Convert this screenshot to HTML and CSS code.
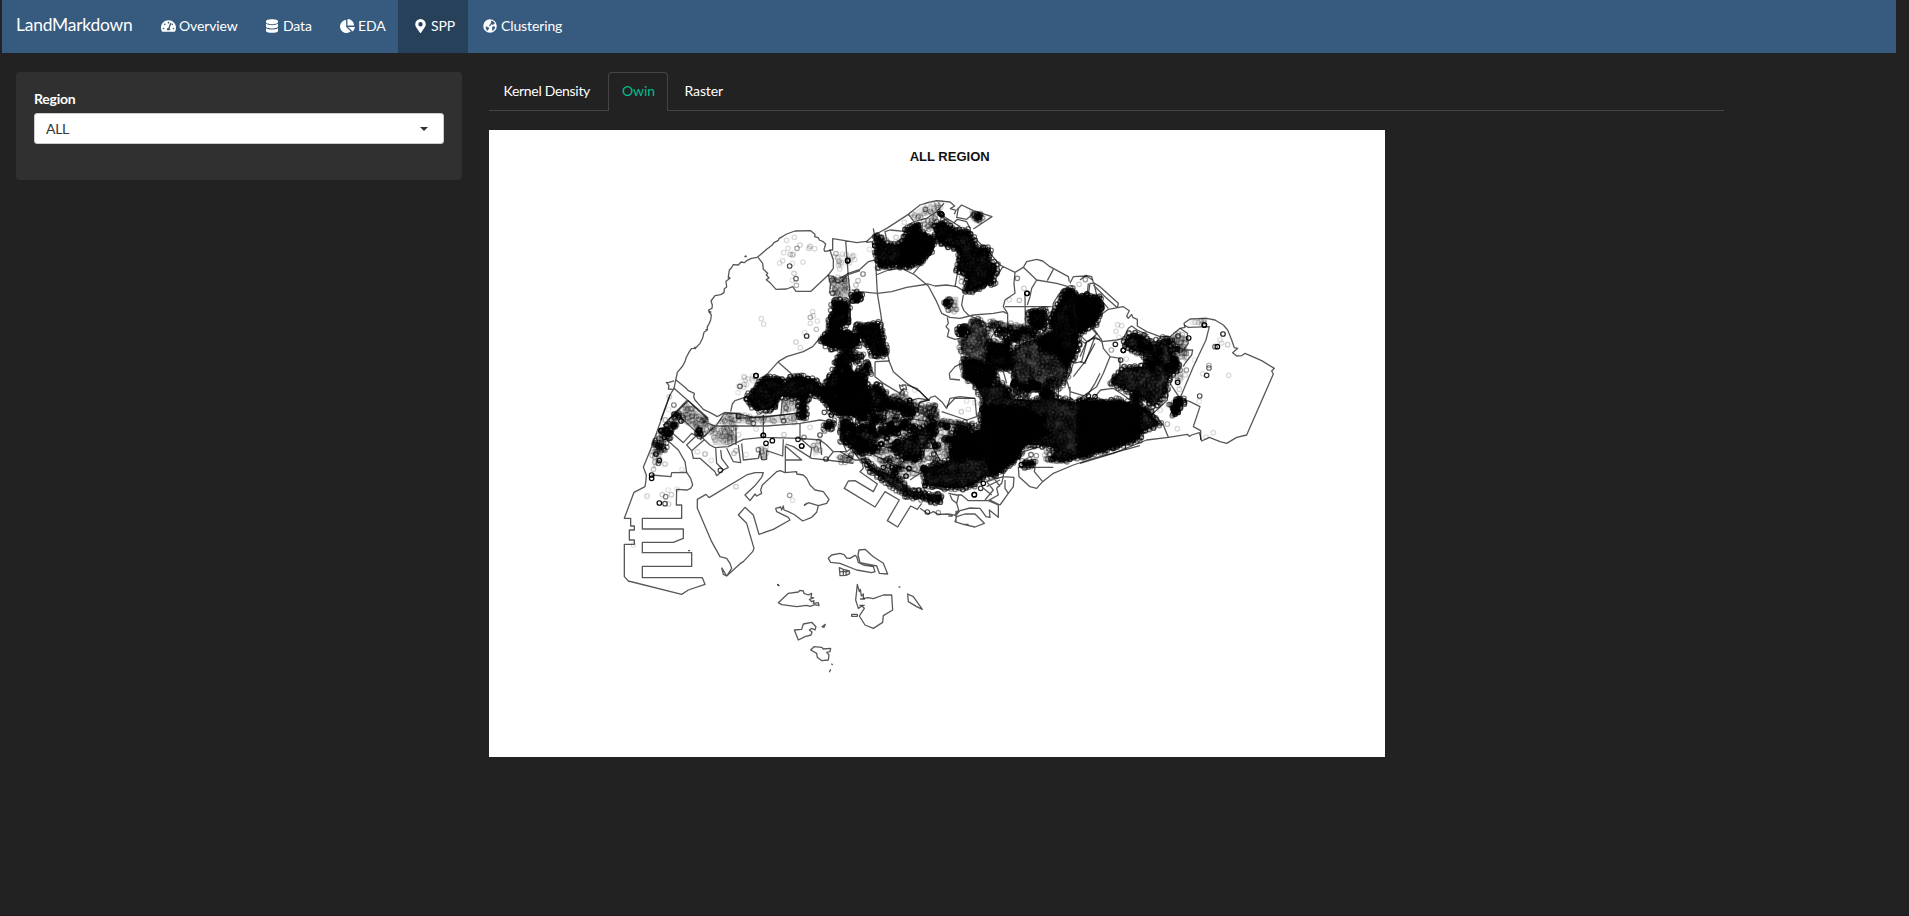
FILE: index.html
```html
<!DOCTYPE html>
<html lang="en">
<head>
<meta charset="utf-8">
<title>LandMarkdown</title>
<link rel="stylesheet" href="styles.css">
</head>
<body>
<nav class="navbar">
  <span class="brand">LandMarkdown</span>
  <a class="nav-item overview"><svg class="icon" viewBox="0 0 576 512" style="width:15px"><path fill-rule="evenodd" d="M288 32C129 32 0 161 0 320c0 53 14 102 39 145 6 10 16 15 28 15h442c12 0 22-5 28-15 25-43 39-92 39-145C576 161 447 32 288 32zm0 64a32 32 0 1 1 0 64 32 32 0 0 1 0-64zM96 384a32 32 0 1 1 0-64 32 32 0 0 1 0 64zm48-160a32 32 0 1 1 0-64 32 32 0 0 1 0 64zm247-54-60 182c26 20 30 46 14 64H231c-20-52 10-94 55-96l60-165c12-28 55-12 45 15zM480 384a32 32 0 1 1 0-64 32 32 0 0 1 0 64zm-48-160a32 32 0 1 1 0-64 32 32 0 0 1 0 64z"/></svg><span>Overview</span></a>
  <a class="nav-item data"><svg class="icon" viewBox="0 0 448 512" style="width:12px"><path d="M448 73v46c0 40-100 73-224 73S0 159 0 119V73C0 33 100 0 224 0s224 33 224 73zm0 103v103c0 40-100 73-224 73S0 319 0 279V176c48 33 136 49 224 49s176-16 224-49zm0 160v103c0 40-100 73-224 73S0 479 0 439V336c48 33 136 49 224 49s176-16 224-49z"/></svg><span>Data</span></a>
  <a class="nav-item eda"><svg class="icon" viewBox="0 0 544 512" style="width:15px"><path d="M527 288H290l158 158c6 6 16 7 23 1 38-36 65-86 73-141 1-9-7-18-17-18zM511 223C503 103 408 8 288 0c-9-1-16 7-16 16v224h224c9 0 16-8 15-17zM224 288V51c0-10-9-18-18-17C86 51-4 156 0 281c5 129 115 233 244 231 50-1 97-17 135-44 8-6 9-17 2-24z"/></svg><span>EDA</span></a>
  <a class="nav-item active"><svg class="icon" viewBox="0 0 384 512" style="width:11px"><path fill-rule="evenodd" d="M172 502C27 291 0 270 0 192a192 192 0 1 1 384 0c0 78-27 99-172 310-10 13-30 13-40 0zM192 272a80 80 0 1 0 0-160 80 80 0 0 0 0 160z"/></svg><span>SPP</span></a>
  <a class="nav-item clustering"><svg class="icon" viewBox="0 0 496 512" style="width:14px"><path fill-rule="evenodd" d="M248 8a248 248 0 1 0 0 496 248 248 0 0 0 0-496zM300 55c60 14 105 59 131 118l-27 3-24 29-38 14-22-25-23 11-13 26-28 17-2 22-28-6-12-18 10-34 34-17 14-7-8-32 24-24-2-30zM90 270l38 6 38 22 32 8 18 31-17 35-18 17-16 44c-49-32-76-91-75-163zm276-5 47 11 25 16c-9 58-44 108-93 138l-23-32 11-45-11-33 11-36z"/></svg><span>Clustering</span></a>
</nav>
<main class="page">
  <aside class="well">
    <label class="label">Region</label>
    <div class="select"><span>ALL</span><i class="caret"></i></div>
  </aside>
  <section class="content">
    <div class="tabs"><a class="tab kernel">Kernel Density</a><a class="tab selected">Owin</a><a class="tab">Raster</a></div>
    <svg class="plot" viewBox="489 130 896 627">
      <rect x="489" y="130" width="896" height="627" fill="#fff"/>
      <text class="plot-title" x="949.7" y="161" text-anchor="middle">ALL REGION</text>
      <g id="points"></g>
      <g class="outline">
        <g transform="translate(600 180) scale(.33333)">
          <path d="M472,232 500,208 516,196 522,188 535,181 537,176 560,162 585,153 632,152 645,163 644,170 655,173 658,180 668,184 677,192 672,208 674,214 682,213 690,211 700,240 700,265 685,285 660,308 633,334 588,334 578,320 560,327 528,328 512,310 499,299 507,294 499,285 503,280 490,268 488,250 474,232"/>
          <path d="M472,232 454,235 440,242 433,248 423,246 415,255 400,254 394,264 388,270 385,290 390,295 378,304 380,321 373,326 372,338 362,344 345,347 333,363 337,375 336,385 326,390 329,398 334,405 332,420 328,430 322,440 322,450 312,457 308,474 300,490 291,500 283,505 274,506 268,515 258,534 255,545 248,558 232,577 222,625 210,645 182,720M222,603 205,608 199,607 207,617 205,627 218,628M436,226l3,4h-6M383,293l6,2M324,392l9,4h-8M317,448l5,4M282,501l6,6"/>
          <path d="M228,600 255,622 265,632 283,640 281,650 285,660 310,688 335,700 352,710M222,625 262,660 325,720M262,660 205,720M688,210H698V176L735,182 770,188 800,184M737,182 745,290 750,340 750,432H720M682,286 700,289 709,307 718,308 725,305 742,285 780,272M685,285 692,315 688,340M685,455 655,480 638,500 610,515 560,530 535,545 495,590 435,652 405,662 397,672 392,695M535,547 575,582M547,655 543,705M352,710 375,697 410,700 460,712 600,700"/>
        </g>
        <g transform="translate(840 180) scale(.33333)">
          <path d="M78,187 90,175 103,165 140,145 205,103 240,75 265,67 290,62 330,66 344,78 331,86 348,91 343,103M100,145 104,170 108,265 112,340 122,400 135,490 148,545 160,575 200,610 240,635 265,660 272,652 285,648 305,665 320,685 330,655 360,650 405,655M0,295 25,280 60,268 85,245 105,240M98,203 97,185 80,187M35,330 60,335 112,340 155,335 200,322 265,312 285,318 320,315 350,320 375,335M108,285 145,270 185,265 225,285 265,318 290,365 305,400 330,412 360,415 400,405 460,400 490,395 503,402V490M370,345 365,375 372,392 385,405 430,425 440,440M220,280 280,210"/>
          <path d="M355,228V265L345,320M350,90 365,75 400,92 456,110 400,147M355,85 350,112 380,118 395,105 400,92M340,130 352,118 380,125 390,145M205,103 222,125 260,115 290,95 312,70M140,180 135,155 150,150 200,155 225,130M360,140 320,115 290,95M410,180 450,220 480,255 525,277 550,262 560,245 590,238 608,243 630,260 685,290 688,305M525,277 522,310 525,340 495,360 490,380 503,400M490,258 470,290M550,262 590,300 575,325 570,350 562,375M590,300 650,310 685,320M640,268 622,302M685,320 655,345 640,370 635,400 615,430M495,380H635M555,340 556,430M322,412 325,430 318,440 327,450 322,470 345,478 360,475M328,580 345,560 365,550M328,580 330,597 360,600M690,310 700,290 740,288 758,300M745,310 742,340"/>
          <path d="M720,465 740,485 725,545 700,550 690,580 680,600 690,635M690,635 740,650 765,610 780,580M740,485 760,475 780,478M755,445 770,462 745,485M765,490 735,545 700,590M105,545 148,543M105,545V590L130,610 180,640 190,625 200,630 197,615 185,615M390,535 455,560 490,575 500,610M480,435 455,470 450,490M130,645 200,665 235,655 265,660M110,690 150,650M230,690 240,665 270,660M540,610 542,670M600,640 660,665M655,620V660M690,620V665"/>
        </g>
        <g transform="translate(1080 240) scale(.33333)">
          <path d="M0,120 18,106 35,110 40,128 60,140 115,190 112,203 75,170 40,135M25,165 30,130H42L50,165 85,205M40,265 55,230 85,208 130,200 148,212 140,228 145,235 155,223 158,232 172,238V258L200,275 240,290 270,290 300,265 315,262 312,250 330,237 380,235 405,240 430,255 443,270 455,300 463,323 473,325 458,338 470,348 485,347 495,340 545,362 583,385 575,393 580,402 500,585 470,592 440,610 420,605 388,592 365,603 358,578 335,585 328,589 322,583 265,592 200,600 100,640 0,670"/>
          <path d="M65,305 110,300 130,295 145,265 155,258 175,272 205,285M40,265 65,300 70,325 90,350 120,355V400L90,420M312,255 325,262 388,260 378,300 340,380 300,475 270,430M300,475 330,485 360,500 340,560 362,572V600M300,265 322,280 325,310 310,330 338,330 335,345 315,370 310,380M90,350 70,400 50,440 0,475M0,280 40,265M0,300 15,310 45,290 65,305M45,290 15,370 0,365M20,305 0,350M40,475 62,450 100,445 130,465 150,480M220,520 250,555 265,592M262,445V480L220,520M138,630 130,575 150,560"/>
        </g>
        <g transform="translate(600 380) scale(.33333)">
          <path d="M210,45 155,200 130,262 139,285 138,300 135,320 102,337 73,415H92V438H103V450H88V480H103V493H73V590L85,603 245,643 265,630 315,613 307,593H127V559H275V518H127V487H220L250,475V447H127V415H245V375H229L230,328 262,330 272,325 278,315 272,295 260,277 215,278 213,290 155,285"/>
          <path d="M205,125 190,135 250,188 275,160 288,168 260,195 275,212 312,180M195,130 265,62 325,115M225,95 330,195M190,170 235,210 255,245 260,277M300,180 350,135 372,102 410,100M330,195 345,203 385,200 430,178 490,172 600,175 660,180 680,195 700,215 740,215 780,185M325,130 345,138 500,138 600,130 600,175M600,130 660,120 690,125M408,135V195M490,105V172M410,100V115L490,112 600,98M275,212 280,235 300,235 345,275 350,287 370,270 350,250 347,205M362,210 365,235 385,262 370,270M380,205 400,245 422,248 415,195M425,190 430,240 475,235 480,215M480,215 485,238H500V212L548,228 550,178M556,276V198L605,240 556,240M557,192 580,200 635,235 680,240 760,250M600,175 635,205 630,235M660,180 665,225M700,215 680,240M740,140 720,170 740,215"/>
          <path d="M327,353 440,285 465,278 490,278 485,292 463,319 435,345 450,362 465,342 470,348 485,340 482,330 487,315 530,275 540,272 555,278 590,275 590,282 610,285 620,295 630,315 645,330 670,335 687,358 680,370 655,377 625,368 612,377M655,377 650,397 635,412 608,423 585,405 565,395 552,390 550,378 545,390 542,381 527,385 530,395 565,412 570,420 520,448 477,463 460,405 435,382 415,405 440,430 462,505 458,515 430,545 422,550 380,588 370,583 365,563M380,588 395,565 390,550 380,535 360,530 335,485 292,385V358L318,343 327,353M365,563 380,588M612,375l10,-6M264,512h6M532,613l6,5"/>
        </g>
        <g transform="translate(840 380) scale(.33333)">
          <path d="M65,240 70,265 60,275 112,312 100,335 45,302 25,303 13,325 105,381 135,335 178,360 142,422 173,441 212,378 232,388 245,370M240,385 265,402 280,395 295,403 325,402 348,406 360,392 390,384 420,385 438,410 450,412 448,390 475,412V375L445,362H385L365,345 350,345 325,340M345,425 350,410 375,402H405L433,430 405,441 370,433ZM348,392V425M366,433H386M325,408H338M330,345 337,360 350,370 356,390 345,405M356,345 350,370M480,375 505,340 520,320 522,292 490,290 485,310 470,325 475,345 445,362M480,375 450,360M490,270V290L440,305 460,330 435,360M455,285 480,320M430,325 455,345M495,300 495,325 505,340M440,320 480,300M535,260 537,290 570,320 590,325 608,305 640,280 700,255 760,235 900,197M537,240 550,215 600,200M585,262 583,275 608,305M537,262H640"/>
          <path d="M120,130 135,115 140,80 200,95M200,15 230,25 265,60 235,70V95L290,125 380,140M320,80 345,55H405L410,110 380,120 305,95M190,20 178,15 182,28 193,30M300,240 280,205 255,205 260,180M100,225 180,260 240,280M130,200 210,215M160,155 210,115 290,130M320,185 330,140M150,160 185,175 230,180M240,280 210,300M0,215 45,240 65,240M30,200 60,240M205,60V90"/>
        </g>
        <g transform="translate(740 530) scale(.33333)">
          <path d="M265,85 275,75 300,70 312,74 320,84 330,85 345,76 350,80 355,97 370,105 400,110 405,125 395,128 350,120 300,100 272,97ZM357,60 375,58 400,80 430,100 443,132 418,130 410,108 360,98 354,75ZM298,113 310,118 328,123 329,131 318,136 300,137ZM298,125H325M310,118V136M318,120V136M115,218 145,190 175,186 180,181 190,183 192,190 205,195 215,190 213,202 221,204 208,208 215,215 222,212 220,220 235,218 237,227 225,224 210,229 200,226 170,230 125,224ZM352,163 358,185 361,178 364,198 370,192 370,205 385,203 400,206 430,195 455,195 458,240 430,257 428,277 400,295 375,285 358,258 373,235 366,228 355,235 347,210Z"/>
          <path d="M360,207H375M358,226H374M335,253H352V259H335ZM503,192 520,200 547,238 530,230 505,215ZM163,300 185,298 190,282 215,277 228,290 225,300 215,295 208,300 216,306 213,315 195,320 175,330ZM246,290 256,283 252,292ZM212,360 222,350 245,352 250,357 272,355 270,365 260,367 267,375 265,390 245,392 232,382 230,370ZM112,163l5,4M476,171h5M274,401l4,4M272,418l-4,9"/>
        </g>
      </g>
    </svg>
  </section>
</main>
<script src="map.js"></script>
</body>
</html>
```
FILE: styles.css
```css
* { box-sizing: border-box; }
body { margin: 0; background: #222; color: #fff; font: 14px/20px Lato, sans-serif; letter-spacing: -0.12px; overflow: hidden; height: 916px; border-bottom: 1px solid #1f191e; }
.navbar { display: flex; align-items: stretch; height: 53px; margin: 0 13px 0 2px; background: #375a7f; }
.brand { width: 144px; padding: 14px 0 0 14px; font-size: 17.4px; line-height: 22px; letter-spacing: -0.2px; }
.nav-item { display: flex; align-items: center; gap: 3px; padding: 0 0 1px 15px; white-space: nowrap; }
.icon { height: 14px; fill: #fff; flex: none; }
.overview { width: 105px; }
.data { width: 74px; gap: 5px; }
.eda { width: 73px; }
.active { width: 70px; padding-left: 17px; gap: 5px; background: #28415b; }
.clustering { gap: 4px; }
.page { display: flex; align-items: flex-start; gap: 27px; padding: 19px 0 0 16px; }
.well { width: 446px; height: 108px; padding: 17px 18px 0; background: #303030; border-radius: 4px; }
.label { display: block; height: 24px; font-weight: 700; letter-spacing: -0.25px; }
.select { display: flex; align-items: center; justify-content: space-between; height: 31px; padding: 0 15px 0 11px; background: #fff; border: 1px solid #ccc; border-radius: 3px; color: #333; letter-spacing: -0.3px; }
.caret { border: 4.5px solid transparent; border-top-color: #333; border-bottom: 0; }
.content { width: 1235px; }
.tabs { display: flex; height: 39px; margin-bottom: 19px; border-bottom: 1px solid #444; }
.tab { height: 39px; padding: 9px 15px 0 16.5px; white-space: nowrap; }
.kernel { width: 119px; padding-left: 14.5px; padding-right: 0; letter-spacing: -0.3px; }
.selected { width: 60px; padding: 8px 0 0 13px; color: #00bc8c; background: #222; border: 1px solid #444; border-bottom: 0; border-radius: 4px 4px 0 0; }
.plot { display: block; width: 896px; height: 627px; }
.plot-title { font: bold 13px "Liberation Sans", sans-serif; letter-spacing: 0; fill: #111; }
.outline { fill: none; stroke: #000; stroke-opacity: .66; stroke-width: 3.9; stroke-linejoin: round; }
```
FILE: map.js
```js
// Event markers are scattered inside hand-digitised areas, three units per pixel.
// Area: [originX, originY, density, base opacity, marker opacity, polygon]
const areas = [
  [600,180,.018,.97,.8,"700,365 725,360 745,370 745,405 742,430 718,435 722,450 760,460 780,458 780,488 760,505 720,507 690,503 665,488 668,470 688,455 687,420 697,400"],
  [600,180,.018,.9,.8,"440,655 480,605 500,593 538,595 552,612 570,595 600,588 640,600 670,625 690,585 708,565 708,545 735,508 748,508 748,545 745,570 780,590 800,600 800,720 780,715 740,690 720,700 690,690 680,670 660,650 630,640 618,660 618,715 597,715 598,680 600,655 550,648 535,655 525,680 505,690 480,690 460,680"],
  [840,180,.018,.85,.8,"108,168 122,172 135,190 165,195 190,185 197,162 230,155 255,162 280,182 275,208 240,245 205,260 180,260 170,255 118,262 110,230"],
  [840,180,.018,.95,.8,"200,175 230,158 280,182 275,208 240,245 195,255 185,220"],
  [840,180,.018,.9,.8,"195,150 215,140 235,130 242,145 215,158"],
  [840,180,.018,.87,.8,"287,130 310,125 345,150 365,155 388,152 400,180 410,204 440,204 448,215 446,240 470,258 464,285 460,308 430,318 400,330 380,336 376,326 384,300 375,278 350,272 355,255 362,225 350,205 320,197 298,188 285,170"],
  [840,180,.02,1,1,"38,345 50,337 62,345 63,357 52,366 39,360"],
  [840,180,.03,.8,.5,"404,107 415,98 424,105 422,118 410,122"],
  [840,180,.02,1,1,"355,447 370,436 383,447 380,462 366,467 355,460"],
  [840,180,.03,.9,.8,"315,362 330,360 330,374 318,374"],
  [840,180,.02,.93,.8,"45,438 118,430 122,455 135,500 138,525 110,530 95,520 80,490 65,465"],
  [840,180,.02,.85,.8,"65,562 85,545 88,582 68,600 60,640 57,695 0,700 0,600 20,590 40,600 50,580"],
  [840,180,.02,.8,.8,"82,628 110,613 138,642 130,678 100,685 82,660"],
  [840,180,.018,.93,.8,"682,324 700,330 710,348 745,355 780,350 780,395 765,430 745,445 712,460 715,500 697,540 675,555 650,520 610,510 590,485 605,470 640,450 628,430 640,400 655,372"],
  [840,180,.018,.93,.8,"568,395 580,388 616,393 616,435 600,450 568,437"],
  [840,180,.013,.72,.6,"520,510 545,488 600,475 650,490 690,540 680,590 655,622 600,630 540,632 522,600 512,560"],
  [840,180,.013,.62,.5,"395,420 418,418 438,450 445,482 480,492 510,497 513,560 500,570 460,560 468,590 448,618 400,605 372,590 368,540 385,530 362,510 362,485 385,465"],
  [840,180,.015,.8,.7,"445,490 505,495 510,560 480,565 440,545"],
  [840,180,.015,.85,.8,"375,540 400,540 465,570 450,615 420,615 380,590"],
  [840,180,.013,.45,.4,"445,435 470,422 560,438 600,453 600,472 530,482 500,460 470,440 450,448"],
  [1080,240,.02,.97,.8,"0,172 20,165 48,180 66,200 48,230 0,270"],
  [1080,240,.014,.8,.7,"132,315 138,300 152,282 188,288 212,305 220,318 248,296 272,298 268,325 285,350 297,370 290,395 265,415 258,460 222,500 190,475 140,450 95,432 98,415 130,385 200,378 200,350 180,335 155,330"],
  [1080,240,.014,.82,.7,"0,480 60,485 110,480 155,492 200,505 215,525 240,552 165,585 150,605 60,635 0,652"],
  [1080,240,.02,1,1,"157,467 168,460 180,468 176,480 163,483"],
  [840,380,.014,.84,.7,"400,0 445,0 460,20 475,5 500,20 515,55 560,60 600,60 610,30 640,35 645,55 700,65 760,62 800,70 900,75 900,177 860,188 780,210 680,245 630,235 650,205 600,195 550,195 540,220 500,260 465,285 435,290 400,315 370,325 320,325 255,315 248,265 300,255 330,240 345,210 380,185 420,170 425,110 430,60"],
  [840,380,.02,1,1,"430,80 520,80 600,110 620,160 550,190 530,230 460,280 440,200"],
  [840,380,.018,.75,.7,"60,140 90,130 115,165 100,215 75,215 55,180"],
  [840,380,.016,.7,.7,"150,200 190,180 240,150 275,125 290,160 252,200 240,235 190,240"],
  [840,380,.016,.75,.7,"340,150 380,150 430,180 420,230 340,230"],
  [840,380,.014,.75,.7,"70,235 100,265 160,285 215,332 250,335 255,358 210,350 150,315 90,270"],
  [840,380,.018,.8,.7,"260,342 305,345 300,362 280,368 260,360"],
  [840,380,.03,.8,.6,"548,247 580,242 585,255 550,258"],
  [840,380,.02,.85,.7,"120,145 150,140 158,155 140,168 118,160"],
  [840,380,.02,.75,.7,"130,70 175,65 230,90 220,105 180,90"],
  [840,380,.014,.4,.5,"235,75 285,70 300,120 380,125 365,145 300,140 240,100"],
  [840,380,.014,.35,.4,"0,90 60,150 60,230 30,190 0,170"],
  [840,380,.008,.12,.3,"60,80 140,80 210,100 300,130 340,150 330,235 250,245 240,290 170,290 100,240 90,130"],
  [840,380,.008,.15,.3,"610,210 670,200 680,245 620,250"],
  [840,380,.01,.3,.4,"130,50 190,35 235,70 235,95 180,90 140,80"],
  [600,380,.02,.7,.7,"725,145 755,145 780,175 800,200 780,220 750,195 725,180"],
  [600,380,.02,.75,.7,"673,130 700,125 702,142 675,148"],
  [600,380,.012,.15,.3,"230,97 262,68 320,118 340,135 312,175 265,130"],
  [600,380,.011,.15,.3,"325,145 350,138 408,140 404,185 375,198 340,195"],
  [600,380,.009,.15,.3,"345,132 375,102 410,103 500,110 595,103 595,128"],
  [600,380,.012,.12,.35,"160,270 155,220 165,180 190,135 215,115 235,120 200,150 185,200 185,240"],
  [600,380,.01,.2,.3,"550,60 590,60 595,90 545,100"],
  [600,380,.012,.1,.3,"635,195 660,180 665,220 640,230"],
  [600,380,.012,.2,.4,"705,230 755,222 760,248 720,248"],
  [600,380,.012,.1,.3,"478,200 500,200 500,235 485,238"],
  [600,180,.012,.25,.3,"690,295 740,285 748,350 700,350"],
  [600,180,.008,.05,.2,"700,225 765,215 765,240 720,270"],
  [840,180,.009,.1,.25,"210,105 245,78 305,65 300,95 250,110 225,122"],
  [840,180,.012,.2,.3,"320,350 355,350 355,395 325,400"],
  [840,180,.012,.15,.35,"245,125 290,100 285,140 260,155"],
  [840,180,.012,.2,.3,"388,90 430,103 425,120 390,115"],
  [1080,240,.012,.2,.3,"270,290 300,275 322,300 320,370 290,340"],
  [1080,240,.014,.3,.4,"262,490 310,480 300,515 280,520"],
  [1080,240,.009,.06,.2,"325,240 380,238 375,255 330,255"],
  [1080,240,.007,.04,.25,"295,390 325,380 300,450 280,430"],
  [600,180,.008,.02,.15,"410,600 445,585 470,590 430,635 410,640"]
];
// Mixed-density districts: [originX, originY, cluster count, polygon]
const mixed = [
  [840,380,75,"0,40 60,50 100,40 160,70 230,90 290,115 370,130 425,160 410,200 340,250 250,270 170,290 90,250 60,200 0,120"],
  [840,380,14,"320,140 420,140 430,230 330,240"],
  [840,380,12,"500,0 640,0 640,50 520,50"],
  [840,180,14,"440,430 560,440 610,470 600,490 450,490"],
  [840,180,8,"0,500 60,510 60,600 0,600"],
  [1080,240,14,"130,290 280,300 300,370 270,410 210,400 200,350"],
  [600,180,10,"660,600 720,570 780,620 780,710 690,690"],
  [600,380,14,"160,260 160,200 200,130 265,80 330,130 370,170 340,190 260,130"],
  [1080,240,7,"262,480 310,480 285,520"]
];
// Single markers: originX, originY, then x,y,opacity triples
const singles = [
  [600,180,"560,181,.15 583,172,.15 564,205,.15 591,205,.35 600,195,.2 551,218,.15 571,223,.2 577,225,.2 580,222,.15 539,249,.15 548,242,.15 578,250,.12 609,246,.15 569,258,.7 582,280,.2 588,296,.6 577,301,.12 589,316,.3 627,205,.2 630,199,.2 644,206,.15 484,416,.15 491,432,.15 638,395,.15 631,412,.3 640,407,.15 652,423,.15 631,430,.15 649,448,.25 614,458,.12 620,468,.85 588,486,.2 601,503,.15 743,242,1 743,242,1 708,221,.3 698,340,.6 420,619,.6 432,590,.15 468,587,1 468,587,.8 546,597,.9 208,650,.2 206,689,.1 221,675,.3 272,686,.35 673,697,.7 694,705,1 708,690,1 717,680,1 725,695,1"],
  [840,180,"69,282,.5 88,208,.12 168,172,.2 139,180,.3 193,127,.15 234,111,.35 256,88,.5 304,102,1 304,102,1 300,100,1 306,105,1 365,290,.3 364,305,.3 374,326,.3 532,295,.5 508,359,.15 538,361,.25 552,325,.2 561,340,1 561,340,.9 717,313,.2 736,298,.2 444,446,.8 460,450,.4 54,302,.25 48,315,.25 364,695,.2 385,688,.12 380,663,.12 405,668,.12 224,630,.1 209,661,1 209,674,1 220,698,1 473,598,.8"],
  [1080,240,"16,119,.25 113,254,.15 125,257,.15 108,274,.15 117,292,.12 94,330,.35 106,313,.9 130,331,1 130,331,1 122,360,.8 162,286,1 228,299,.6 294,288,.8 326,294,1 300,330,.7 373,255,1 373,255,.9 429,282,.9 420,300,.15 425,309,.15 443,314,.2 405,320,.6 412,320,1 387,376,.3 387,384,.6 380,406,.8 368,401,.15 446,406,.15 359,468,.7 358,484,.1 400,578,.15 378,591,.15 292,566,.15 262,552,.3 319,390,.4 293,427,1 285,523,.7 277,527,.5 287,485,1 241,510,.15 344,360,.1 139,357,.15 45,470,.9 25,468,.9 215,515,.8"],
  [600,380,"222,75,.3 243,123,1 183,152,1 183,152,1 193,172,1 200,135,.6 168,222,1 178,242,.9 155,285,1 155,295,1 195,252,.25 246,268,.1 141,346,.1 141,350,.1 178,369,1 195,371,.7 206,372,.2 197,350,.5 187,344,.2 214,344,.2 204,330,.12 231,327,.12 100,495,.12 408,320,.2 569,346,.4 578,361,.12 361,271,.7 315,222,.3 292,215,.15 334,241,.12 408,212,.25 402,220,.25 438,224,.12 551,123,.4 522,124,.3 460,130,.6 490,166,1 490,166,1 498,190,1 517,182,1 552,164,.2 630,142,.15 605,198,1 605,198,.8 594,178,.9 612,172,.5 660,165,.7 678,237,.7 468,147,.15 416,164,.15 388,165,.3 475,209,.5 738,187,1 738,187,1"],
  [840,380,"123,193,1 123,193,1 105,216,.4 130,262,.9 145,258,.7 207,266,1 198,288,1 167,278,1 255,317,1 262,396,.7 295,398,.4 194,350,.5 281,222,.7 275,235,.2 302,168,.15 165,120,.15 175,130,.3 175,134,.3 336,226,1 573,224,.6 589,227,.4 544,254,1 566,260,.2 240,155,.15 403,344,1 403,344,1 430,310,1 422,325,.8 20,187,1 20,187,1 15,238,.3 120,240,.3"]
];
let seed = 48271;
const rnd = () => (seed = seed * 16807 % 2147483647) / 2147483647;
const inside = (p, x, y) => {
  let hit = false;
  for (let i = 0, j = p.length - 1; i < p.length; j = i++)
    if ((p[i][1] > y) !== (p[j][1] > y) && x < (p[j][0] - p[i][0]) * (y - p[i][1]) / (p[j][1] - p[i][1]) + p[i][0]) hit = !hit;
  return hit;
};
const ring = (x, y, o) => `<circle cx="${x.toFixed(1)}" cy="${y.toFixed(1)}" r="6.8" stroke-opacity="${o}"/>`;
const parse = text => {
  const p = text.split(" ").map(s => s.split(",").map(Number));
  const xs = p.map(q => q[0]), ys = p.map(q => q[1]);
  const x0 = Math.min(...xs), y0 = Math.min(...ys);
  return { p, x0, y0, w: Math.max(...xs) - x0, h: Math.max(...ys) - y0 };
};
const open = (ox, oy) => `<g transform="translate(${ox} ${oy}) scale(.33333)" fill="none" stroke="#000" stroke-width="3.6">`;
let out = "";
for (const [ox, oy, density, base, opacity, text] of areas) {
  const { p, x0, y0, w, h } = parse(text);
  out += open(ox, oy) + `<polygon points="${text}" fill="#000" stroke="none" fill-opacity="${base}"/>`;
  for (let i = 0; i < w * h * density; i++) {
    const x = x0 + rnd() * w, y = y0 + rnd() * h;
    if (inside(p, x, y)) out += ring(x, y, opacity * (base > .6 ? .5 : .7));
  }
  if (base > .6) p.forEach((a, k) => {
    const b = p[(k + 1) % p.length], n = Math.ceil(Math.hypot(b[0] - a[0], b[1] - a[1]) / 5);
    for (let i = 0; i < n; i++) out += ring(a[0] + (b[0] - a[0]) * i / n + rnd() * 12 - 6, a[1] + (b[1] - a[1]) * i / n + rnd() * 12 - 6, opacity * .7);
  });
  out += "</g>";
}
for (const [ox, oy, count, text] of mixed) {
  const { p, x0, y0, w, h } = parse(text);
  out += open(ox, oy);
  for (let n = 0; n < count;) {
    const x = x0 + rnd() * w, y = y0 + rnd() * h;
    if (!inside(p, x, y)) continue;
    n++;
    const size = 4 + rnd() * 12, spread = 8 + rnd() * 22, o = .25 + rnd() * .45;
    for (let i = 0; i < size; i++) out += ring(x + (rnd() - .5) * spread, y + (rnd() - .5) * spread, o);
  }
  out += "</g>";
}
for (const [ox, oy, text] of singles) {
  out += open(ox, oy);
  for (const s of text.split(" ")) out += ring(...s.split(",").map(Number));
  out += "</g>";
}
document.getElementById("points").innerHTML = out;
```
